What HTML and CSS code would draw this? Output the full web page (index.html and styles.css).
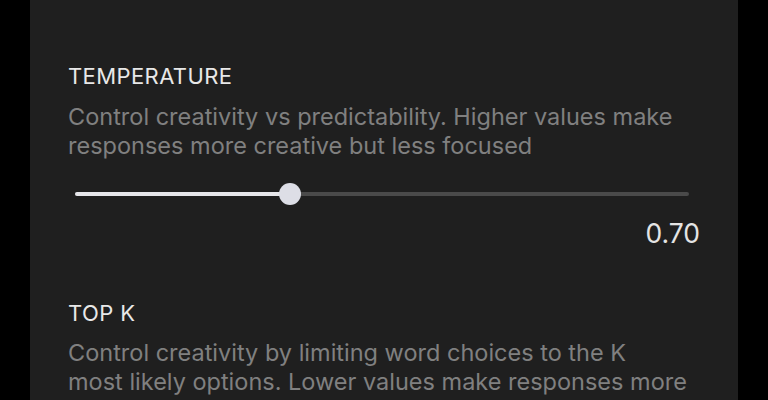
FILE: index.html
```html
<!DOCTYPE html>
<html>
<head>
<meta charset="utf-8">
<link rel="stylesheet" href="styles.css">
</head>
<body>
<div class="panel">
  <section class="setting">
    <h2 class="label">TEMPERATURE</h2>
    <p class="desc">Control creativity vs predictability. Higher values make responses more creative but less focused</p>
    <div class="slider">
      <div class="track">
        <div class="fill" style="width:35%"></div>
        <div class="thumb" style="left:35%"></div>
      </div>
    </div>
    <div class="value">0.70</div>
  </section>
  <section class="setting second">
    <h2 class="label">TOP K</h2>
    <p class="desc">Control creativity by limiting word choices to the K most likely options. Lower values make responses more focused</p>
  </section>
</div>
</body>
</html>
```
FILE: styles.css
```css
html, body {
  margin: 0;
  padding: 0;
  background: #000;
  height: 400px;
  overflow: hidden;
}
.panel {
  margin: 0 30px;
  height: 400px;
  overflow: hidden;
  background: #1f1f1f;
  padding: 63px 38px 0 38px;
  box-sizing: border-box;
  font-family: Inter, "Noto Sans", sans-serif;
}
.setting {
  display: flex;
  flex-direction: column;
}
.label {
  margin: 0;
  font-size: 22px;
  font-weight: 400;
  line-height: 26px;
  color: #e8e8e8;
  letter-spacing: 0.4px;
}
.desc {
  margin: 13px 0 0 0;
  max-width: 619px;
  font-size: 23.5px;
  line-height: 29px;
  color: #808080;
}
.slider {
  margin: 22px 11px 0 7px;
  height: 24px;
  display: flex;
  align-items: center;
}
.track {
  position: relative;
  flex: 1;
  height: 4px;
  background: #4a4a4a;
  border-radius: 2px;
}
.fill {
  height: 100%;
  background: #e6e6ea;
  border-radius: 2px;
}
.thumb {
  position: absolute;
  top: 50%;
  width: 22px;
  height: 22px;
  margin-left: -11px;
  margin-top: -11px;
  border-radius: 50%;
  background: #dddee6;
}
.value {
  align-self: flex-end;
  margin-top: 11px;
  font-size: 26.5px;
  line-height: 32px;
  color: #e4e4e4;
}
.second {
  margin-top: 51px;
}
.second .desc {
  margin-top: 12px;
}
```
